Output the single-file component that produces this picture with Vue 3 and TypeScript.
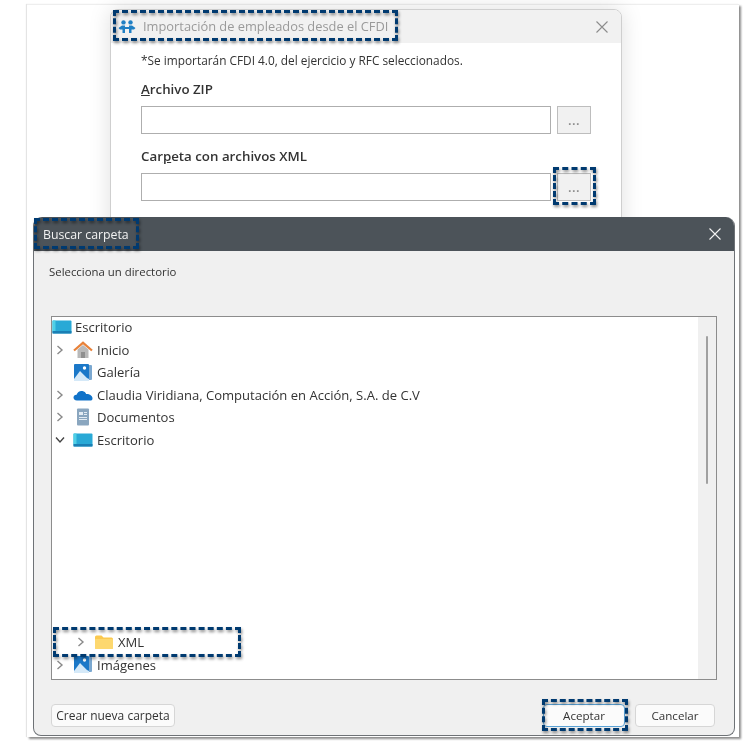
<script setup lang="ts">
interface TreeRow {
  label: string;
  icon: "desktop" | "home" | "gallery" | "cloud" | "docs" | "folder";
  chevron?: "right" | "down";
  depth: number;
}

const topRows: TreeRow[] = [
  { label: "Escritorio", icon: "desktop", depth: 0 },
  { label: "Inicio", icon: "home", chevron: "right", depth: 1 },
  { label: "Galería", icon: "gallery", depth: 1 },
  { label: "Claudia Viridiana, Computación en Acción, S.A. de C.V", icon: "cloud", chevron: "right", depth: 1 },
  { label: "Documentos", icon: "docs", chevron: "right", depth: 1 },
  { label: "Escritorio", icon: "desktop", chevron: "down", depth: 1 },
];

const bottomRows: TreeRow[] = [
  { label: "XML", icon: "folder", chevron: "right", depth: 2 },
  { label: "Imágenes", icon: "gallery", chevron: "right", depth: 1 },
];

const sections = [topRows, bottomRows];

// recuadros punteados sobre la captura: x, y, ancho, alto
const callouts = [
  { x: 113, y: 10, w: 285, h: 31 },
  { x: 553, y: 167, w: 43, h: 38 },
  { x: 34, y: 218, w: 105, h: 31 },
  { x: 53, y: 627, w: 188, h: 30 },
  { x: 542, y: 699, w: 86, h: 32 },
];
</script>

<template>
  <div class="stage">
    <div class="frame"></div>

    <section class="back-window">
      <header class="back-title">
        <svg class="app-icon" viewBox="0 0 18 14" width="18" height="14">
          <circle cx="5.5" cy="2.4" r="2.2" fill="#1f7fc4" />
          <circle cx="12.5" cy="2.4" r="2.2" fill="#1f7fc4" />
          <path d="M0.5 8 L4 5.5 H7 V13 H4.5 V9.5 L2 9.5 Z" fill="#1f7fc4" />
          <path d="M17.5 8 L14 5.5 H11 V13 H13.5 V9.5 L16 9.5 Z" fill="#1f7fc4" />
          <path d="M7 7 H11 V9 H7 Z" fill="#1f7fc4" />
        </svg>
        <span class="back-title-text">Importación de empleados desde el CFDI</span>
        <svg class="back-close" viewBox="0 0 12 12" width="12" height="12">
          <path d="M0.5 0.5 L11.5 11.5 M11.5 0.5 L0.5 11.5" stroke="#8c8c8c" stroke-width="1.1" />
        </svg>
      </header>
      <div class="back-body">
        <p class="note">*Se importarán CFDI 4.0, del ejercicio y RFC seleccionados.</p>
        <label class="field-label"><u>A</u>rchivo ZIP</label>
        <div class="field-row">
          <div class="text-input"></div>
          <div class="browse">...</div>
        </div>
        <label class="field-label second">Car<u>p</u>eta con archivos XML</label>
        <div class="field-row">
          <div class="text-input"></div>
          <div class="browse">...</div>
        </div>
      </div>
    </section>

    <section class="front-window">
      <header class="front-title">
        <span>Buscar carpeta</span>
        <svg viewBox="0 0 12 12" width="12" height="12">
          <path d="M0.5 0.5 L11.5 11.5 M11.5 0.5 L0.5 11.5" stroke="#f2f2f2" stroke-width="1.1" />
        </svg>
      </header>
      <div class="front-body">
        <p class="prompt">Selecciona un directorio</p>
        <div class="tree">
          <div class="tree-list">
            <div v-for="(rows, s) in sections" :key="s" class="tree-section">
              <div v-for="row in rows" :key="row.label + row.depth" class="tree-row" :class="`depth-${row.depth}`">
                <span v-if="row.depth > 0" class="chevron">
                  <svg v-if="row.chevron === 'right'" viewBox="0 0 8 10" width="8" height="10">
                    <path d="M1.5 1 L6 5 L1.5 9" fill="none" stroke="#8a8a8a" stroke-width="1.4" />
                  </svg>
                  <svg v-else-if="row.chevron === 'down'" viewBox="0 0 10 8" width="10" height="8">
                    <path d="M1 1.5 L5 6 L9 1.5" fill="none" stroke="#444" stroke-width="1.4" />
                  </svg>
                </span>
                <span class="tree-icon">
                  <svg v-if="row.icon === 'desktop'" viewBox="0 0 20 16" width="20" height="16">
                    <rect x="0.5" y="1.5" width="19" height="13" rx="1" fill="#29a9d6" />
                    <rect x="0.5" y="12" width="19" height="2.5" fill="#1b7fb4" />
                    <rect x="0.5" y="1.5" width="3" height="10.5" fill="#4fd0e6" />
                  </svg>
                  <svg v-else-if="row.icon === 'home'" viewBox="0 0 20 18" width="20" height="18">
                    <path d="M4.5 8.5 L10 4 L15.5 8.5 V17 H4.5 Z" fill="#b9b9b9" />
                    <rect x="8" y="11" width="4" height="6" fill="#8f8f8f" />
                    <path d="M1 9.5 L10 1.8 L19 9.5" fill="none" stroke="#e8823a" stroke-width="2.2" />
                  </svg>
                  <svg v-else-if="row.icon === 'gallery'" viewBox="0 0 20 19" width="20" height="19">
                    <rect x="4" y="2" width="15" height="15" rx="1" fill="#7ba8d0" />
                    <rect x="1" y="1" width="15" height="17" rx="1" fill="#1b78c8" />
                    <circle cx="11.5" cy="5" r="1.7" fill="#ffffff" />
                    <path d="M1 16 L7 8 L14 15 L16 16 V18 H1 Z" fill="#d5e9f8" />
                  </svg>
                  <svg v-else-if="row.icon === 'cloud'" viewBox="0 0 20 14" width="20" height="14">
                    <path d="M4 12.5 C1.5 12.5 0.5 10.8 0.5 9.5 C0.5 7.8 2 6.6 3.6 6.8 C4.4 4 6.8 2.5 9.4 3 C11.4 3.4 12.6 4.6 13.2 6 C16.8 5.6 19.5 8 19.5 10.4 C19.5 11.8 18.6 12.5 17.4 12.5 Z" fill="#1173c9" />
                  </svg>
                  <svg v-else-if="row.icon === 'docs'" viewBox="0 0 18 18" width="18" height="18">
                    <rect x="3" y="0.5" width="12" height="17" rx="1" fill="#8aa6bf" />
                    <rect x="5" y="4" width="4" height="3" fill="#e3ecf4" />
                    <path d="M10 4.5 H13 M10 6.5 H13 M5 9.5 H13 M5 11.5 H13" stroke="#e3ecf4" stroke-width="1" />
                  </svg>
                  <svg v-else viewBox="0 0 20 16" width="20" height="16">
                    <path d="M1 3 Q1 1.5 2.5 1.5 H7.5 L9.5 3.5 H17.5 Q19 3.5 19 5 V14 Q19 15 17.5 15 H2.5 Q1 15 1 14 Z" fill="#fbc94f" />
                    <rect x="1" y="5" width="18" height="10" rx="1" fill="#fdd86f" />
                  </svg>
                </span>
                <span class="tree-label">{{ row.label }}</span>
              </div>
            </div>
          </div>
          <div class="scroll-track"><div class="scroll-thumb"></div></div>
        </div>
        <footer class="actions">
          <button class="btn new-folder">Crear nueva carpeta</button>
          <button class="btn primary">Aceptar</button>
          <button class="btn">Cancelar</button>
        </footer>
      </div>
    </section>

    <div
      v-for="(c, i) in callouts"
      :key="i"
      class="callout"
      :style="{ left: c.x + 'px', top: c.y + 'px', width: c.w + 'px', height: c.h + 'px' }"
    ></div>
  </div>
</template>

<style scoped>
.stage {
  position: relative;
  width: 749px;
  height: 745px;
  overflow: hidden;
  background: #fff;
  font-family: "Open Sans", "Noto Sans", sans-serif;
  color: #333;
  filter: blur(0.4px);
}

.frame {
  position: absolute;
  left: 27px;
  top: 4px;
  width: 712px;
  height: 732px;
  background: #fff;
  border-top: 1px solid #eee;
  box-shadow: 2px 2px 2px #8d8d8d, -1px 0 1px #e4e4e4;
}

.back-window {
  position: absolute;
  left: 110px;
  top: 9px;
  width: 510px;
  height: 240px;
  background: #fff;
  border: 1px solid #cfcfcf;
  border-radius: 8px 8px 0 0;
  box-shadow: 0 0 22px rgba(0, 0, 0, 0.13);
  overflow: hidden;
}

.back-title {
  display: flex;
  align-items: center;
  height: 33px;
  padding: 0 13px 0 7px;
  background: #f1f1f1;
}

.app-icon {
  flex: none;
  margin-right: 7px;
}

.back-title-text {
  flex: 1;
  margin-top: -1px;
  font-size: 12.85px;
  color: #9a9a9a;
}

.back-close {
  flex: none;
}

.back-body {
  padding: 9px 30px 0;
}

.note {
  margin: 0;
  font-size: 11.85px;
  line-height: 16px;
  color: #333;
}

.field-label {
  display: block;
  margin-top: 13px;
  font-size: 13.3px;
  line-height: 17px;
  font-weight: 600;
  color: #333;
}

.field-label.second {
  margin-top: 14px;
}

.field-row {
  display: flex;
  gap: 6px;
  align-items: center;
  margin-top: 8px;
}

.text-input {
  width: 410px;
  height: 28px;
  box-sizing: border-box;
  background: #fff;
  border: 1px solid #aeaeae;
}

.browse {
  width: 34px;
  height: 28px;
  box-sizing: border-box;
  background: #f1f1f1;
  border: 1px solid #bdbdbd;
  font-size: 13px;
  line-height: 27px;
  font-weight: 600;
  letter-spacing: 0.5px;
  text-align: center;
  color: #8a8a8a;
}

.front-window {
  position: absolute;
  left: 33px;
  top: 217px;
  width: 702px;
  height: 519px;
  box-sizing: border-box;
  display: flex;
  flex-direction: column;
  background: #f0f0f0;
  border: 1px solid #6e7276;
  border-top: 0;
  border-radius: 9px 9px 8px 8px;
  overflow: hidden;
}

.front-title {
  flex: none;
  display: flex;
  align-items: center;
  justify-content: space-between;
  height: 34px;
  padding: 0 13px 0 9px;
  background: #4c5359;
  color: #f2f2f2;
  font-size: 12.3px;
}

.front-body {
  flex: 1;
  display: flex;
  flex-direction: column;
  padding: 0 19px 8px 17px;
}

.prompt {
  margin: 13px 0 0 -2px;
  font-size: 11.4px;
  line-height: 15px;
  color: #333;
}

.tree {
  display: flex;
  width: 666px;
  height: 364px;
  box-sizing: border-box;
  margin-top: 37px;
  background: #fff;
  border: 1.5px solid #8c8c8c;
}

.tree-list {
  flex: 1;
  display: flex;
  flex-direction: column;
  justify-content: space-between;
  margin-top: -1px;
  padding-bottom: 3px;
  font-size: 13.05px;
}

.tree-row {
  display: flex;
  align-items: center;
  height: 22.5px;
  color: #333;
}

.depth-0 .tree-icon {
  margin-right: 3px;
}

.depth-1 {
  padding-left: 1.5px;
}

.depth-2 {
  padding-left: 22.5px;
}

.chevron {
  display: flex;
  align-items: center;
  justify-content: center;
  width: 12px;
  margin-right: 7.5px;
}

.tree-icon {
  display: flex;
  align-items: center;
  justify-content: center;
  width: 20px;
  margin-right: 4px;
}

.scroll-track {
  flex: none;
  width: 18px;
  background: #f0f0f0;
}

.scroll-thumb {
  width: 2px;
  height: 148px;
  margin: 19px 0 0 8px;
  background: #a0a0a0;
  border-radius: 1px;
}

.actions {
  display: flex;
  gap: 10px;
  margin-top: 24px;
}

.btn {
  width: 80px;
  height: 23px;
  padding: 0;
  box-sizing: border-box;
  background: #fbfbfb;
  border: 1px solid #d6d6d6;
  border-radius: 4px;
  font-family: inherit;
  font-size: 11.6px;
  color: #333;
}

.new-folder {
  width: 124px;
  margin-right: auto;
  font-size: 12px;
}

.primary {
  width: 82px;
  border: 1.5px solid #5aa2d6;
}

.callout {
  position: absolute;
  box-sizing: border-box;
  border: 3px dashed #003a70;
  filter: drop-shadow(1.5px 2px 1.5px rgba(0, 0, 0, 0.45));
}
</style>
